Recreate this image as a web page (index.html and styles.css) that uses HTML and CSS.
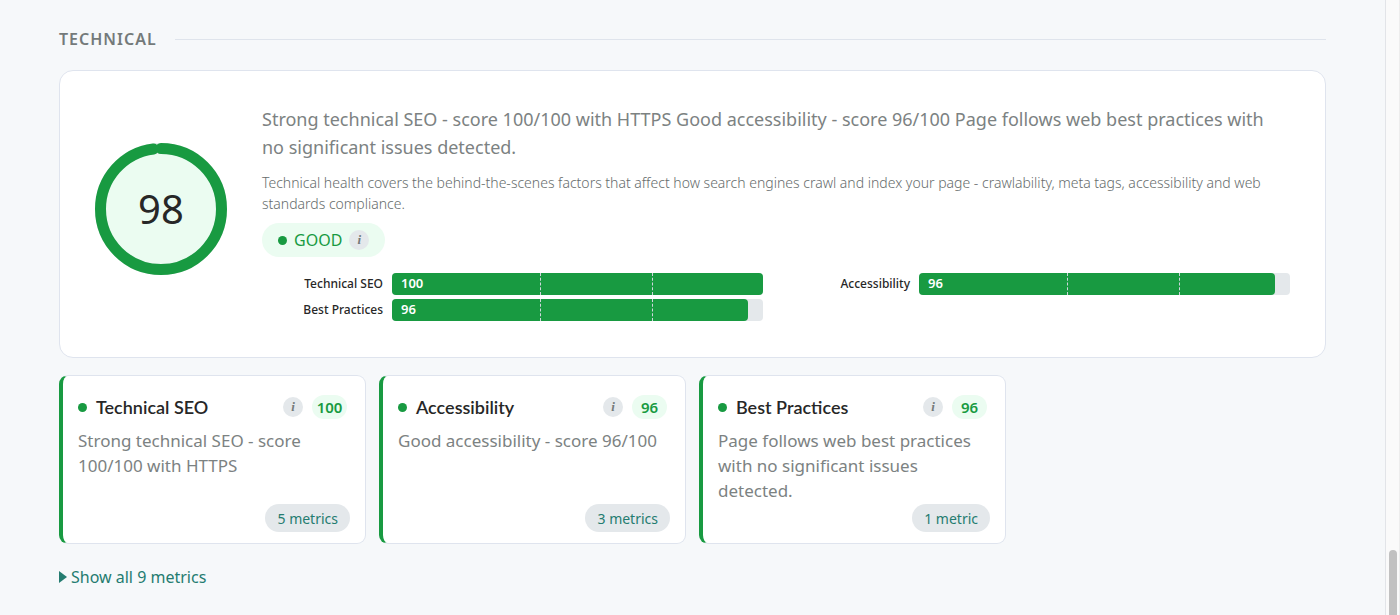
FILE: index.html
```html
<!DOCTYPE html>
<html lang="en">
<head>
  <meta charset="UTF-8">
  <meta name="viewport" content="width=device-width, initial-scale=1.0">
  <title>Technical report</title>
  <link rel="stylesheet" href="styles.css">
</head>
<body>
  <main class="report">
    <h2 class="section-title">TECHNICAL</h2>

    <section class="summary-card">
      <div class="score-ring">
        <svg viewBox="0 0 132 132" aria-hidden="true">
          <circle class="ring-track" cx="66" cy="66" r="60.5" />
          <circle class="ring-value" cx="66" cy="66" r="60.5" pathLength="100" stroke-dasharray="98 100" transform="rotate(-90 66 66)" />
        </svg>
        <span class="score">98</span>
      </div>
      <div class="summary">
        <p class="lead">Strong technical SEO - score 100/100 with HTTPS Good accessibility - score 96/100 Page follows web best practices with no significant issues detected.</p>
        <p class="about">Technical health covers the behind-the-scenes factors that affect how search engines crawl and index your page - crawlability, meta tags, accessibility and web standards compliance.</p>
        <div class="rating">
          <span class="dot"></span>
          <span>GOOD</span>
          <button class="info" aria-label="About this rating">i</button>
        </div>
        <div class="bars">
          <div class="bar-row">
            <span class="bar-label">Technical SEO</span>
            <div class="bar"><div class="fill" style="width: 100%">100</div></div>
          </div>
          <div class="bar-row">
            <span class="bar-label">Accessibility</span>
            <div class="bar"><div class="fill" style="width: 96%">96</div></div>
          </div>
          <div class="bar-row">
            <span class="bar-label">Best Practices</span>
            <div class="bar"><div class="fill" style="width: 96%">96</div></div>
          </div>
        </div>
      </div>
    </section>

    <div class="cards">
      <article class="card">
        <div class="card-header">
          <span class="dot"></span>
          <h3>Technical SEO</h3>
          <button class="info" aria-label="About Technical SEO">i</button>
          <span class="badge">100</span>
        </div>
        <p>Strong technical SEO - score 100/100 with HTTPS</p>
        <button class="metrics">5 metrics</button>
      </article>
      <article class="card">
        <div class="card-header">
          <span class="dot"></span>
          <h3>Accessibility</h3>
          <button class="info" aria-label="About Accessibility">i</button>
          <span class="badge">96</span>
        </div>
        <p>Good accessibility - score 96/100</p>
        <button class="metrics">3 metrics</button>
      </article>
      <article class="card">
        <div class="card-header">
          <span class="dot"></span>
          <h3>Best Practices</h3>
          <button class="info" aria-label="About Best Practices">i</button>
          <span class="badge">96</span>
        </div>
        <p>Page follows web best practices with no significant issues detected.</p>
        <button class="metrics">1 metric</button>
      </article>
    </div>

    <details class="all-metrics">
      <summary>Show all 9 metrics</summary>
    </details>
  </main>
  <div class="scrollbar">
    <div class="thumb"></div>
  </div>
</body>
</html>
```

FILE: styles.css
```css
* {
  box-sizing: border-box;
}

body {
  display: flex;
  min-height: 100vh;
  margin: 0;
  background-color: #f6f8fa;
  color: #272727;
  font-family: "Noto Sans", "Open Sans", sans-serif;
}

h2, h3, p {
  margin: 0;
}

button {
  border: none;
  font-family: inherit;
  cursor: pointer;
}

.report {
  flex: 1;
  padding: 27px 59px 0;
}

/* Section heading with a rule beside it */
.section-title {
  display: flex;
  align-items: center;
  gap: 18px;
  margin-bottom: 19px;
  color: #747a7a;
  font-size: 16px;
  font-weight: 600;
  line-height: 24px;
  letter-spacing: 1px;
}

.section-title::after {
  content: "";
  flex: 1;
  height: 1px;
  background-color: #dfe4ec;
}

/* Summary card */
.summary-card {
  display: flex;
  align-items: center;
  gap: 35px;
  padding: 34px 35px 36px;
  background-color: #fff;
  border: 1px solid #dfe4ee;
  border-radius: 14px;
}

.score-ring {
  display: grid;
  place-items: center;
  flex: none;
  width: 132px;
  margin-bottom: 8px;
}

.score-ring svg,
.score {
  grid-area: 1 / 1;
}

.ring-track {
  fill: #ebfcf1;
  stroke: #e4e8eb;
  stroke-width: 11;
}

.ring-value {
  fill: none;
  stroke: #189a41;
  stroke-width: 11;
  stroke-linecap: round;
}

.score {
  font-size: 40px;
  line-height: 48px;
}

.summary {
  flex: 1;
}

.lead {
  margin-bottom: 11px;
  color: #7c8282;
  font-size: 18px;
  line-height: 28px;
}

.about {
  margin-bottom: 9px;
  color: #666c6c;
  font-size: 14px;
  font-weight: 300;
  line-height: 21px;
}

.rating {
  display: inline-flex;
  align-items: center;
  gap: 7px;
  height: 34px;
  margin-bottom: 16px;
  padding: 0 16px;
  background-color: #ebfcf1;
  border-radius: 17px;
  color: #189a41;
  font-size: 16px;
}

.dot {
  width: 9px;
  height: 9px;
  background-color: #189a41;
  border-radius: 50%;
}

.info {
  width: 20px;
  height: 20px;
  padding: 0;
  background-color: #e4e8eb;
  border-radius: 50%;
  color: #747a7a;
  font-family: "Liberation Serif", serif;
  font-size: 13px;
  font-style: italic;
  font-weight: bold;
  line-height: 20px;
}

/* Score bars */
.bars {
  display: grid;
  grid-template-columns: 1fr 1fr;
  gap: 4px 26px;
}

.bar-row {
  display: flex;
  align-items: center;
  gap: 9px;
}

.bar-label {
  width: 121px;
  font-size: 12px;
  font-weight: 500;
  line-height: 20px;
  text-align: right;
}

.bar {
  position: relative;
  flex: 1;
  height: 22px;
  background-color: #e4e8eb;
  border-radius: 4px;
}

/* thresholds at 40% and 70% */
.bar::before,
.bar::after {
  content: "";
  position: absolute;
  top: 0;
  bottom: 0;
  left: 40%;
  border-left: 1px dashed #cfd6dc;
}

.bar::after {
  left: 70%;
}

.fill {
  height: 100%;
  padding-left: 9px;
  background-color: #189a41;
  border-radius: 4px;
  color: #fff;
  font-size: 13px;
  font-weight: 600;
  line-height: 20px;
}

/* Metric cards */
.cards {
  display: grid;
  grid-template-columns: repeat(4, 1fr);
  gap: 13px;
  margin-top: 17px;
}

.card {
  display: flex;
  flex-direction: column;
  padding: 19px 15px 11px;
  background-color: #fff;
  border: 1px solid #dfe4ee;
  border-left: 4px solid #189a41;
  border-radius: 9px;
}

.card-header {
  display: flex;
  align-items: center;
  gap: 9px;
  height: 24px;
  margin-bottom: 9px;
}

.card h3 {
  flex: 1;
  font-family: Lato, sans-serif;
  font-size: 18px;
  font-weight: 600;
}

.badge {
  min-width: 35px;
  margin-right: 3px;
  background-color: #ebfcf1;
  border-radius: 12px;
  color: #189a41;
  font-size: 15px;
  font-weight: 600;
  line-height: 24px;
  text-align: center;
}

.card p {
  flex: 1;
  margin-bottom: 1px;
  color: #7c8282;
  font-size: 17px;
  line-height: 25px;
}

.metrics {
  align-self: flex-end;
  height: 28px;
  padding: 0 12px;
  background-color: #e4e8eb;
  border-radius: 14px;
  color: #247c70;
  font-size: 14px;
}

.all-metrics {
  margin-top: 21px;
  color: #247c70;
}

.all-metrics summary {
  display: flex;
  align-items: center;
  gap: 4px;
  font-size: 16px;
  line-height: 24px;
  cursor: pointer;
}

.all-metrics summary::before {
  content: "";
  border: 6px solid transparent;
  border-right: none;
  border-left: 8px solid #247c70;
}

/* Scroll rail */
.scrollbar {
  display: flex;
  align-items: flex-end;
  justify-content: center;
  width: 15px;
  background-color: #fafafa;
  border-right: 1px solid #ededed;
  border-left: 1px solid #e2e4e8;
}

.thumb {
  width: 8px;
  height: 65px;
  background-color: #c1c1c1;
  border-radius: 4px 4px 0 0;
}
```
